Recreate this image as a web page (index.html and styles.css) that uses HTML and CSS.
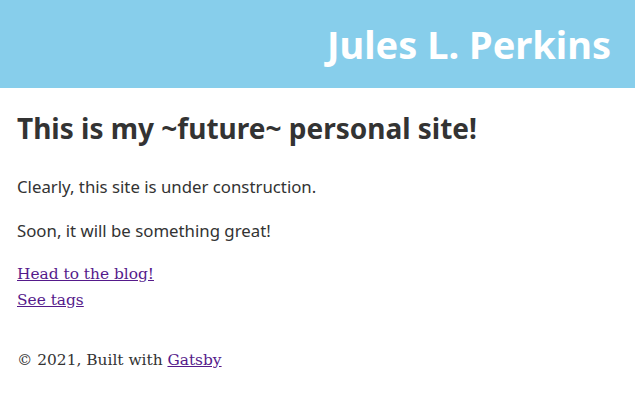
FILE: index.html
```html
<!DOCTYPE html>
<html>
<head>
<meta charset="utf-8">
<link rel="stylesheet" href="styles.css">
</head>
<body>
<header class="site-header">
  <h2 class="site-title">Jules L. Perkins</h2>
</header>
<main class="content">
  <h1 class="page-title">This is my ~future~ personal site!</h1>
  <p class="text">Clearly, this site is under construction.</p>
  <p class="text">Soon, it will be something great!</p>
  <div class="links">
    <a href="#">Head to the blog!</a><br>
    <a href="#">See tags</a>
  </div>
</main>
<footer class="site-footer">© 2021, Built with <a href="#">Gatsby</a></footer>
</body>
</html>
```
FILE: styles.css
```css
body {
  margin: 0;
  font-family: "DejaVu Serif", Georgia, serif;
  font-size: 15.4px;
  color: #333;
}
.site-header {
  background: #87ceeb;
  height: 88px;
  display: flex;
  align-items: center;
  justify-content: flex-end;
  padding: 0 24px;
}
.site-title {
  margin: 0;
  color: #fff;
  font-family: "Noto Sans", sans-serif;
  font-weight: 700;
  font-size: 38px;
}
.content {
  padding: 0 17px;
}
.page-title {
  font-family: "Noto Sans", sans-serif;
  font-size: 28px;
  font-weight: 700;
  margin: 21px 0 28px;
  color: #333;
}
.text {
  font-family: "Noto Sans", sans-serif;
  font-size: 16.8px;
  margin: 0 0 21px;
}
.links {
  line-height: 26px;
  margin-top: -2px;
}
a {
  color: #551a8b;
}
.site-footer {
  padding: 0 17px;
  margin-top: 38px;
}
```
